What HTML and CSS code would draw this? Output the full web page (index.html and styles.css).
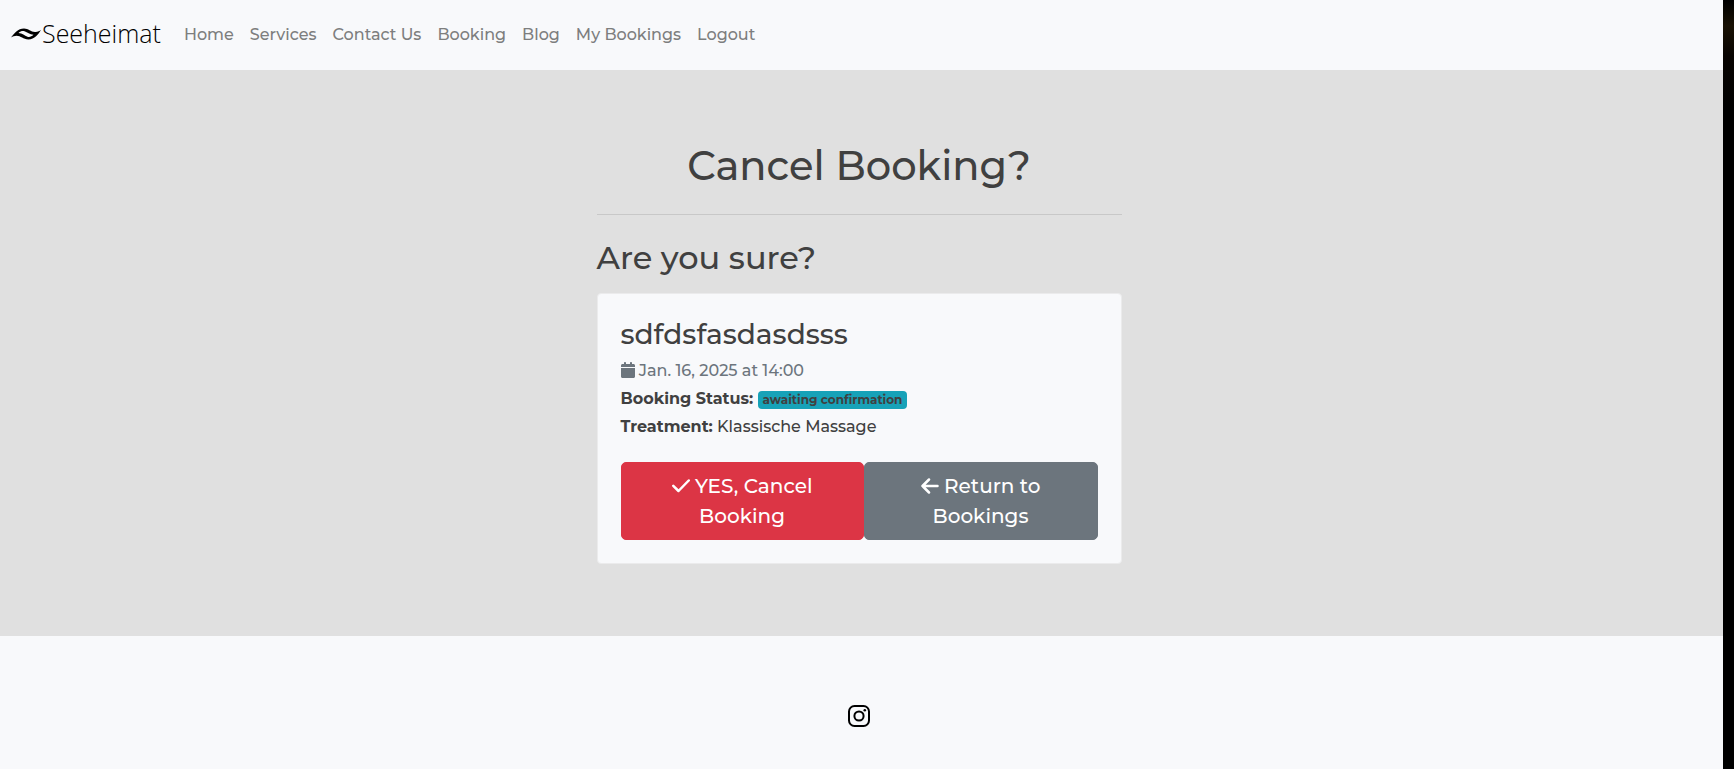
FILE: index.html
```html
<!DOCTYPE html>
<html lang="en">
<head>
<meta charset="utf-8">
<meta name="viewport" content="width=device-width, initial-scale=1">
<title>Cancel Booking</title>
<link rel="stylesheet" href="styles.css">
</head>
<body>
<div class="page">
  <header class="navbar">
    <a class="brand" href="#">
      <svg class="brand-mark" viewBox="0 0 30 14" aria-hidden="true"><path d="M0 11.500C3 7.500 7 2.500 13 2.500C17.500 2.500 20 6.200 24.500 5.900C27 5.700 28.500 5.200 30 4C27.500 8 23.500 13.500 17.500 13.500C12 13.500 10 9.800 5.500 9.800C3.500 9.800 1.700 10.500 0 11.500Z"/><path d="M7.500 7C9.500 5.200 11.500 4.700 13.500 5.300C16.500 6.300 18.500 8.400 22.500 8.800C20.500 10.700 18.500 11.300 16.500 10.700C13.500 9.700 11.500 7.400 7.500 7Z" fill="#f8f9fb"/></svg>
      <span>Seeheimat</span>
    </a>
    <nav class="nav">
      <a href="#">Home</a>
      <a href="#">Services</a>
      <a href="#">Contact Us</a>
      <a href="#">Booking</a>
      <a href="#">Blog</a>
      <a href="#">My Bookings</a>
      <a href="#">Logout</a>
    </nav>
  </header>
  <main class="main">
    <div class="content">
      <h1 class="title">Cancel Booking?</h1>
      <hr class="divider">
      <h2 class="question">Are you sure?</h2>
      <section class="card">
        <h3 class="card-title">sdfdsfasdasdsss</h3>
        <p class="line muted"><svg class="calendar" viewBox="0 0 448 512" aria-hidden="true"><path fill="currentColor" d="M96 32V64H48C21.500 64 0 85.500 0 112v48H448V112c0-26.500-21.500-48-48-48H352V32c0-17.700-14.300-32-32-32s-32 14.300-32 32V64H160V32c0-17.700-14.300-32-32-32S96 14.300 96 32zM448 192H0V464c0 26.500 21.500 48 48 48H400c26.500 0 48-21.500 48-48V192z"/></svg> Jan. 16, 2025 at 14:00</p>
        <p class="line"><strong>Booking Status:</strong> <span class="badge">awaiting confirmation</span></p>
        <p class="line"><strong>Treatment:</strong> Klassische Massage</p>
        <div class="actions">
          <button class="btn danger" type="button"><svg class="btn-icon" viewBox="0 0 18 20" aria-hidden="true"><path d="M1.300 9.800L6.500 15L16.700 4.500" fill="none" stroke="currentColor" stroke-width="2.500" stroke-linecap="round" stroke-linejoin="round"/></svg> YES, Cancel<br>Booking</button>
          <a class="btn secondary" href="#"><svg class="btn-icon" viewBox="0 0 18 20" aria-hidden="true"><path d="M8 3.500L1.500 10L8 16.500M1.500 10H16.500" fill="none" stroke="currentColor" stroke-width="2.500" stroke-linecap="round" stroke-linejoin="round"/></svg> Return to<br>Bookings</a>
        </div>
      </section>
    </div>
  </main>
  <footer class="footer">
    <a class="social" href="#" aria-label="Instagram"><svg class="instagram" viewBox="0 0 22 22" aria-hidden="true"><rect x="1" y="1" width="20" height="20" rx="5.500" fill="none" stroke="#000" stroke-width="2"/><circle cx="11" cy="11" r="4.600" fill="none" stroke="#000" stroke-width="2"/><circle cx="16.800" cy="5.200" r="1.300" fill="#000"/></svg></a>
  </footer>
</div>
</body>
</html>
```
FILE: styles.css
```css
* { box-sizing: border-box; }
body {
  margin: 0;
  min-height: 100vh;
  display: flex;
  padding-right: 11px;
  background: linear-gradient(#000, #191204 26px, #080401 56px, #000 110px);
  color: #404040;
  font-family: Montserrat, Inter, sans-serif;
  font-size: 16px;
  font-weight: 500;
  line-height: 24px;
}
.page { flex: 1; display: flex; flex-direction: column; background: #f8f9fb; }
a { text-decoration: none; }
.navbar { display: flex; align-items: center; height: 70px; padding: 0 11px 1px; gap: 15px; }
.brand { display: flex; align-items: center; color: #000; font-family: "Open Sans", sans-serif; font-size: 25px; font-weight: 300; line-height: 36px; padding-bottom: 4px; gap: 1px; }
.brand-mark { width: 30px; height: 14px; }
.nav { display: flex; }
.nav a { padding: 8px; color: #7d7e7e; }
.main { display: flex; justify-content: center; padding: 72px 21px 72px 16px; background: #e0e0e0; }
.content { width: 525px; max-width: 100%; }
h1, h2, h3, p { margin: 0; font-weight: 500; }
.title { font-size: 40px; line-height: 48px; text-align: center; }
.divider { margin: 24px 0; border: 0; border-top: 1px solid #c8c8c8; }
.question { margin-bottom: 16px; font-size: 32px; line-height: 38px; }
.card { padding: 23px; border: 1px solid #ebebec; border-radius: 4px; background: #f8f9fb; }
.card-title { margin-bottom: 8px; font-size: 28px; line-height: 34px; }
.line { margin-bottom: 4px; }
.muted { color: #6c757d; }
.calendar { width: 14px; height: 16px; vertical-align: -2px; }
strong { font-weight: 700; }
.badge { display: inline-block; padding: 3px 5px; border-radius: 4px; background: #17a2b8; font-size: 12px; font-weight: 700; line-height: 12px; }
.actions { display: flex; margin-top: 23px; }
.btn { flex: 22; padding: 8px 16px; border: 1px solid; border-radius: 5px; color: #fff; font: inherit; font-size: 20px; line-height: 30px; text-align: center; }
.danger { flex: 23; background: #dc3545; border-color: #dc3545; }
.secondary { background: #6c757d; border-color: #6c757d; }
.btn-icon { width: 18px; height: 20px; vertical-align: -3px; }
.footer { flex: 1; padding: 69px 21px 32px 16px; text-align: center; }
.social { display: inline-block; line-height: 0; }
.instagram { width: 22px; height: 22px; }
```
